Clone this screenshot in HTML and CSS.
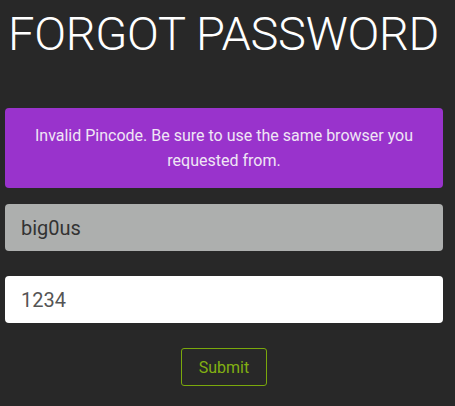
FILE: index.html
```html
<!DOCTYPE html>
<html>
<head>
<meta charset="utf-8">
<link rel="stylesheet" href="styles.css">
</head>
<body>
<div class="page">
  <h1 class="title">FORGOT PASSWORD</h1>
  <div class="alert">Invalid Pincode. Be sure to use the same browser you requested from.</div>
  <form class="form">
    <input class="field field-disabled" type="text" value="big0us" disabled>
    <input class="field" type="text" value="1234">
    <div class="actions"><button class="submit" type="button">Submit</button></div>
  </form>
</div>
</body>
</html>
```
FILE: styles.css
```css
html, body {
  margin: 0;
  padding: 0;
  background: #282828;
  font-family: Roboto, "Liberation Sans", sans-serif;
}
.page {
  width: 438px;
  margin-left: 5px;
  padding-top: 6px;
}
.title {
  margin: 0 0 0 3px;
  font-size: 47px;
  font-weight: 300;
  color: #ffffff;
  line-height: 56px;
  white-space: nowrap;
  letter-spacing: -0.3px;
}
.alert {
  margin-top: 46px;
  background: #9933cc;
  color: #f0e6f5;
  border-radius: 4px;
  text-align: center;
  font-size: 16px;
  line-height: 25px;
  padding: 15px 20px 15px;
}
.form {
  display: flex;
  flex-direction: column;
  margin-top: 16px;
}
.field {
  box-sizing: border-box;
  height: 47px;
  border: none;
  border-radius: 4px;
  padding: 0 16px;
  font-family: Roboto, "Liberation Sans", sans-serif;
  font-size: 20px;
  color: #555;
  background: #ffffff;
  margin-bottom: 25px;
  outline: none;
}
.field-disabled {
  background: #adafae;
  color: #333;
  -webkit-text-fill-color: #333;
  opacity: 1;
}
.actions {
  display: flex;
  justify-content: center;
}
.submit {
  width: 86px;
  height: 38px;
  background: transparent;
  border: 1px solid #7aa80c;
  border-radius: 3px;
  color: #82b012;
  font-family: Roboto, "Liberation Sans", sans-serif;
  font-size: 16px;
}
```
